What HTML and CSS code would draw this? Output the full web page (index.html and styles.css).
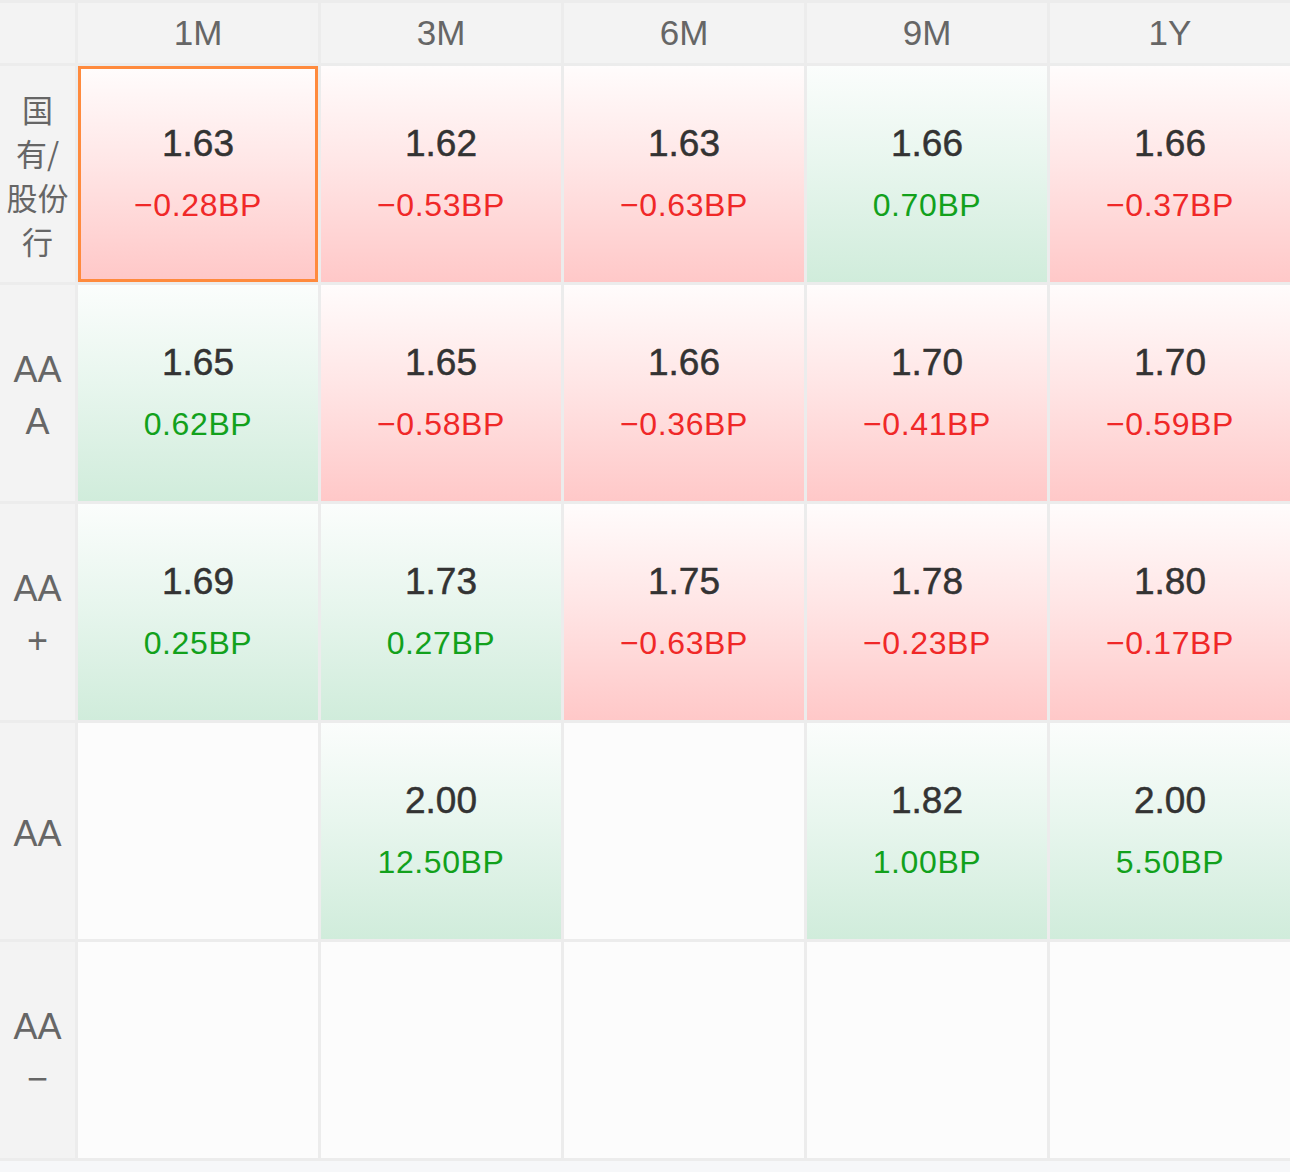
FILE: index.html
```html
<!DOCTYPE html>
<html lang="zh-CN">
<head>
<meta charset="utf-8">
<title>Rates</title>
<link rel="stylesheet" href="styles.css">
</head>
<body>
<div class="grid">
  <div class="corner"></div>
  <div class="head">1M</div>
  <div class="head">3M</div>
  <div class="head">6M</div>
  <div class="head">9M</div>
  <div class="head">1Y</div>

  <div class="label cjk"><span>国</span><span>有/</span><span>股份</span><span>行</span></div>
  <div class="cell down selected"><div class="val">1.63</div><div class="bp">−0.28BP</div></div>
  <div class="cell down"><div class="val">1.62</div><div class="bp">−0.53BP</div></div>
  <div class="cell down"><div class="val">1.63</div><div class="bp">−0.63BP</div></div>
  <div class="cell up"><div class="val">1.66</div><div class="bp">0.70BP</div></div>
  <div class="cell down"><div class="val">1.66</div><div class="bp">−0.37BP</div></div>

  <div class="label"><span>AA</span><span>A</span></div>
  <div class="cell up"><div class="val">1.65</div><div class="bp">0.62BP</div></div>
  <div class="cell down"><div class="val">1.65</div><div class="bp">−0.58BP</div></div>
  <div class="cell down"><div class="val">1.66</div><div class="bp">−0.36BP</div></div>
  <div class="cell down"><div class="val">1.70</div><div class="bp">−0.41BP</div></div>
  <div class="cell down"><div class="val">1.70</div><div class="bp">−0.59BP</div></div>

  <div class="label"><span>AA</span><span>+</span></div>
  <div class="cell up"><div class="val">1.69</div><div class="bp">0.25BP</div></div>
  <div class="cell up"><div class="val">1.73</div><div class="bp">0.27BP</div></div>
  <div class="cell down"><div class="val">1.75</div><div class="bp">−0.63BP</div></div>
  <div class="cell down"><div class="val">1.78</div><div class="bp">−0.23BP</div></div>
  <div class="cell down"><div class="val">1.80</div><div class="bp">−0.17BP</div></div>

  <div class="label"><span>AA</span></div>
  <div class="cell empty"></div>
  <div class="cell up"><div class="val">2.00</div><div class="bp">12.50BP</div></div>
  <div class="cell empty"></div>
  <div class="cell up"><div class="val">1.82</div><div class="bp">1.00BP</div></div>
  <div class="cell up"><div class="val">2.00</div><div class="bp">5.50BP</div></div>

  <div class="label"><span>AA</span><span>−</span></div>
  <div class="cell empty"></div>
  <div class="cell empty"></div>
  <div class="cell empty"></div>
  <div class="cell empty"></div>
  <div class="cell empty"></div>
</div>
</body>
</html>
```
FILE: styles.css
```css
html, body {
  margin: 0;
  padding: 0;
  background: #f6f7f9;
}
body {
  font-family: "Liberation Sans", "Noto Sans CJK SC", sans-serif;
}
.grid {
  display: grid;
  grid-template-columns: 75px repeat(5, 240px);
  grid-template-rows: 60px repeat(5, 216px);
  gap: 3px;
  padding: 3px 0;
  background: #ececec;
  width: 1290px;
}
.corner, .head, .label {
  background: #f3f3f3;
}
.head {
  display: flex;
  align-items: center;
  justify-content: center;
  font-size: 35px;
  color: #666;
}
.label {
  display: flex;
  flex-direction: column;
  align-items: center;
  justify-content: center;
  box-sizing: border-box;
  padding-top: 6px;
  font-size: 36px;
  line-height: 52px;
  color: #666;
}
.label.cjk {
  font-family: "Noto Sans CJK SC", sans-serif;
  font-size: 31px;
  line-height: 44px;
  padding-top: 2px;
}
.label span {
  display: block;
  white-space: nowrap;
}
.cell {
  display: flex;
  flex-direction: column;
  align-items: center;
  justify-content: center;
  background: #fcfcfc;
  box-sizing: border-box;
}
.cell.down {
  background: linear-gradient(to bottom, #fffcfc 0%, #ffe6e6 45%, #ffc8c8 100%);
}
.cell.up {
  background: linear-gradient(to bottom, #fbfdfc 0%, #e8f6ee 45%, #d0ecdb 100%);
}
.cell.selected {
  border: 3px solid #ff8a3d;
}
.val {
  font-size: 37px;
  line-height: 62px;
  color: #333;
  -webkit-text-stroke: 0.5px #333;
}
.bp {
  font-size: 32px;
  line-height: 60px;
  letter-spacing: 0.6px;
}
.down .bp {
  color: #f02828;
}
.up .bp {
  color: #12a11c;
}
```
